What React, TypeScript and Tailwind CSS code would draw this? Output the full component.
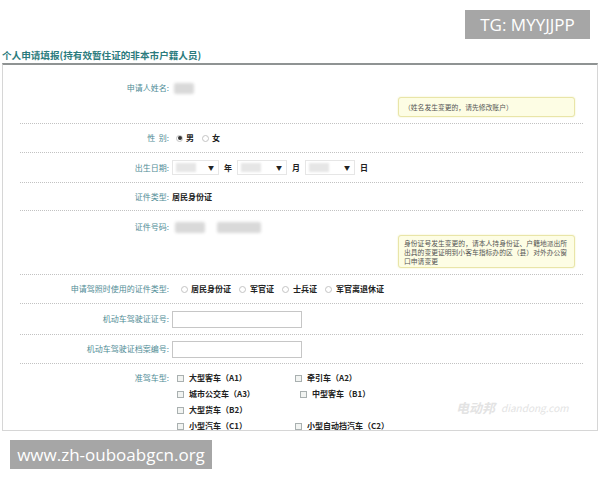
import React from "react";

const FONT = { fontFamily: '"Noto Sans CJK SC", "Noto Sans", sans-serif' };

function Label({ children }: { children: React.ReactNode }) {
  return (
    <div className="w-[152px] shrink-0 pr-[3px] text-right text-[8px] leading-[14px] text-[#4f8c96]">
      {children}
    </div>
  );
}

function Radio({ checked }: { checked?: boolean }) {
  return (
    <span className="inline-flex h-[7px] w-[7px] shrink-0 items-center justify-center rounded-full border border-[#c4c4c4] bg-white">
      {checked && <span className="h-[4px] w-[4px] rounded-full bg-[#333]" />}
    </span>
  );
}

function Check() {
  return <span className="inline-block h-[7px] w-[7px] shrink-0 border border-[#a9b0b0] bg-[#f2f4f2]" />;
}

function Blur({ w }: { w: string }) {
  return <span className={`block h-[11px] ${w} rounded-[2px] bg-[#d9d9d9] blur-[1.5px]`} />;
}

function Select({ w }: { w: string }) {
  return (
    <span className={`inline-flex h-[15px] ${w} items-center justify-between border border-[#e6e6e6] bg-white pl-[3px] pr-[4px]`}>
      <span className="h-[9px] w-[20px] bg-[#e6e6e6] blur-[1px]" />
      <span className="text-[6px] leading-none text-[#222]">▼</span>
    </span>
  );
}

function Tip({ children, h }: { children: React.ReactNode; h: string }) {
  return (
    <div
      className={`ml-[378px] w-[177px] ${h} rounded-[3px] border border-[#e9e5a8] bg-[#fdfde4] px-[5px] py-[3px] text-[6.8px] leading-[9px] text-[#555] shadow-[0_0_2px_#eeeebb]`}
    >
      {children}
    </div>
  );
}

const Dot = () => <div className="border-t border-dotted border-[#c2c2c2]" />;

export default function App() {
  return (
    <div className="relative h-[480px] w-[600px] overflow-hidden bg-white" style={FONT}>
      <div className="h-[48px]" />
      <div className="pl-[2px] text-[9.6px] font-bold leading-[14px] text-[#2b7b7d]">
        个人申请填报(持有效暂住证的非本市户籍人员)
      </div>
      <div className="ml-[2px] mr-[2px] mt-[1px] h-[368px] overflow-hidden border-x border-b border-t-2 border-x-[#d6d6d6] border-b-[#d6d6d6] border-t-[#8f9393]">
        <div className="ml-[17px] mr-[14px]">
          {/* name */}
          <div className="flex flex-col pb-[6px]">
            <div className="mt-[16px] flex h-[14px] items-center">
              <Label>申请人姓名:</Label>
              <span className="ml-[2px] flex">
                <Blur w="w-[20px]" />
              </span>
            </div>
            <div className="mt-[2px] flex">
              <Tip h="h-[20px]">
                <div className="pt-[2px]">（姓名发生变更的，请先修改账户）</div>
              </Tip>
            </div>
          </div>
          <Dot />
          {/* gender */}
          <div className="flex h-[28px] items-center">
            <Label>性&nbsp;&nbsp;别:</Label>
            <div className="flex items-center gap-[3px] text-[8px] font-bold text-[#222]">
              <span className="ml-[4px] flex"><Radio checked /></span>
              <span>男</span>
              <span className="ml-[5px] flex"><Radio /></span>
              <span>女</span>
            </div>
          </div>
          <Dot />
          {/* birth */}
          <div className="flex h-[29px] items-center">
            <Label>出生日期:</Label>
            <div className="flex items-center gap-[5px] text-[8px] font-bold text-[#222]">
              <Select w="w-[47px]" />
              <span>年</span>
              <Select w="w-[50px]" />
              <span>月</span>
              <Select w="w-[50px]" />
              <span>日</span>
            </div>
          </div>
          <Dot />
          {/* id type */}
          <div className="flex h-[27px] items-center">
            <Label>证件类型:</Label>
            <span className="text-[8px] font-bold text-[#222]">居民身份证</span>
          </div>
          <Dot />
          {/* id number */}
          <div className="flex flex-col pb-[6px]">
            <div className="mt-[9px] flex h-[14px] items-center">
              <Label>证件号码:</Label>
              <span className="ml-[3px] flex items-center gap-[12px]">
                <Blur w="w-[30px]" />
                <Blur w="w-[44px]" />
              </span>
            </div>
            <div className="mt-[1px] flex">
              <Tip h="h-[33px]">
                身份证号发生变更的，请本人持身份证、户籍地派出所出具的变更证明到小客车指标办的区（县）对外办公窗口申请变更
              </Tip>
            </div>
          </div>
          <Dot />
          {/* license id type */}
          <div className="flex h-[28px] items-center">
            <Label>申请驾照时使用的证件类型:</Label>
            <div className="flex items-center text-[8px] font-bold text-[#222]">
              <span className="ml-[9px] flex"><Radio /></span>
              <span className="ml-[3px]">居民身份证</span>
              <span className="ml-[8px] flex"><Radio /></span>
              <span className="ml-[4px]">军官证</span>
              <span className="ml-[8px] flex"><Radio /></span>
              <span className="ml-[4px]">士兵证</span>
              <span className="ml-[8px] flex"><Radio /></span>
              <span className="ml-[4px]">军官离退休证</span>
            </div>
          </div>
          <Dot />
          {/* license no */}
          <div className="flex h-[30px] items-center">
            <Label>机动车驾驶证证号:</Label>
            <span className="h-[17px] w-[130px] border border-[#c6c6c6] bg-white" />
          </div>
          <Dot />
          {/* archive no */}
          <div className="flex h-[28px] items-center">
            <Label>机动车驾驶证档案编号:</Label>
            <span className="h-[17px] w-[130px] border border-[#c6c6c6] bg-white" />
          </div>
          <Dot />
          {/* vehicle types */}
          <div className="flex pt-[7px]">
            <Label>准驾车型:</Label>
            <div className="grid grid-cols-[118px_auto] gap-y-[2px] pl-[5px] text-[8px] font-bold leading-[14px] text-[#222]">
              <span className="flex items-center gap-[5px]"><Check />大型客车（A1）</span>
              <span className="flex items-center gap-[5px]"><Check />牵引车（A2）</span>
              <span className="flex items-center gap-[5px]"><Check />城市公交车（A3）</span>
              <span className="ml-[5px] flex items-center gap-[5px]"><Check />中型客车（B1）</span>
              <span className="flex items-center gap-[5px]"><Check />大型货车（B2）</span>
              <span />
              <span className="flex items-center gap-[5px]"><Check />小型汽车（C1）</span>
              <span className="flex items-center gap-[5px]"><Check />小型自动挡汽车（C2）</span>
            </div>
          </div>
        </div>
      </div>

      {/* faint site watermark */}
      <div className="absolute left-[456px] top-[398px] flex items-center gap-[6px] italic text-[#e3e3e3]">
        <span className="text-[13px] font-bold">电动邦</span>
        <span className="text-[10px]">diandong.com</span>
      </div>

      {/* overlay labels */}
      <div
        className="absolute left-[465px] top-[10px] flex h-[29px] w-[125px] items-center justify-center bg-[#a6a6a6] text-[17px] text-white"
        style={{ fontFamily: '"Open Sans", "Liberation Sans", sans-serif' }}
      >
        TG: MYYJJPP
      </div>
      <div
        className="absolute left-[10px] top-[440px] flex h-[29px] w-[202px] items-center justify-center bg-[#a6a6a6] text-[17px] text-white"
        style={{ fontFamily: '"Open Sans", "Liberation Sans", sans-serif' }}
      >
        www.zh-ouboabgcn.org
      </div>
    </div>
  );
}
